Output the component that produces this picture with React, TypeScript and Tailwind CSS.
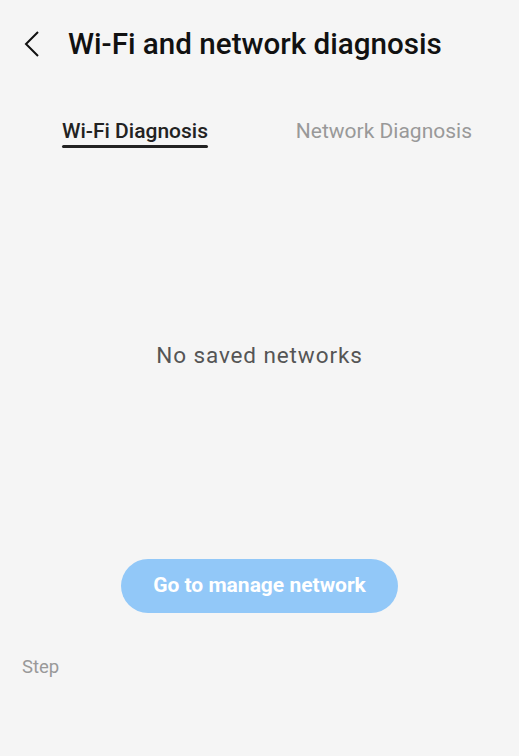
export default function App() {
  return (
    <div className="flex h-[756px] w-full flex-col bg-[#f5f5f5] font-['Roboto',sans-serif]">
      <header className="flex h-[88px] items-center pl-[24px]">
        <svg width="16" height="26" viewBox="0 0 16 26" className="shrink-0">
          <path d="M14 1 L2 13 L14 25" fill="none" stroke="#111" strokeWidth="2" />
        </svg>
        <h1 className="ml-[28px] text-[29.6px] font-medium text-[#111]">Wi-Fi and network diagnosis</h1>
      </header>

      <div className="mt-[30px] flex justify-between pl-[62px] pr-[47px]">
        <div className="flex flex-col items-stretch">
          <span className="text-[21px] font-medium leading-[26px] text-[#222]">Wi-Fi Diagnosis</span>
          <span className="mt-[1px] h-[3px] rounded-full bg-[#222]"></span>
        </div>
        <span className="text-[21px] leading-[26px] text-[#999]">Network Diagnosis</span>
      </div>

      <div className="flex flex-1 flex-col items-center">
        <p className="mt-[191px] text-[22.5px] leading-[32px] tracking-[0.9px] text-[#555]">No saved networks</p>
        <button className="mt-[188px] h-[54px] w-[277px] rounded-full bg-[#92c8f8] text-[21px] font-bold text-white">
          Go to manage network
        </button>
      </div>

      <div className="px-[22px] pb-[77px] text-[18.5px] leading-[24px] text-[#999]">Step</div>
    </div>
  )
}
